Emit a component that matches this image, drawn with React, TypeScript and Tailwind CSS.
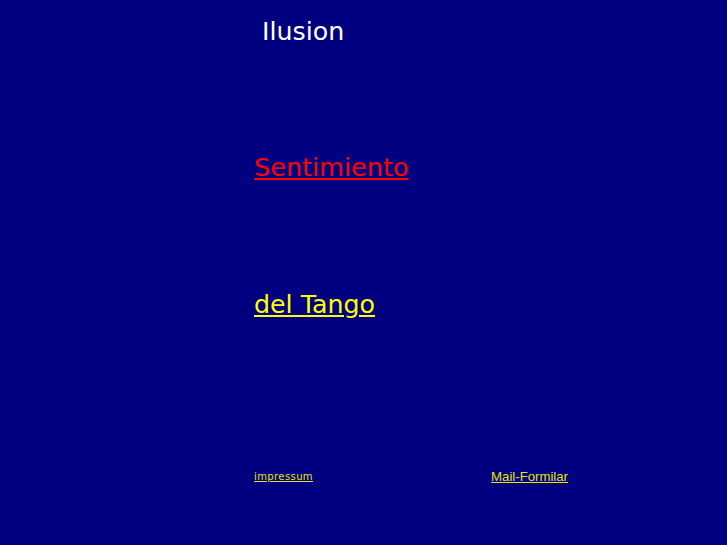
export default function App() {
  return (
    <div className="w-[727px] h-[545px] bg-[#000080] overflow-hidden" style={{ fontFamily: '"DejaVu Sans", sans-serif' }}>
      <div className="flex flex-col pl-[254px]">
        <div className="pt-[14px] pl-[8px] text-[25.3px] leading-[36px] text-white">Ilusion</div>
        <a href="#" className="mt-[99px] text-[25.5px] leading-[36px] text-[#ff0000] underline w-fit">Sentimiento</a>
        <a href="#" className="mt-[102px] text-[25.3px] leading-[36px] text-[#ffff00] underline w-fit">del Tango</a>
        <div className="mt-[146px] flex items-center w-[330px]">
          <a href="#" className="text-[10px] tracking-[0.4px] leading-[14px] text-[#e6e600] underline">impressum</a>
          <a href="#" className="ml-auto mr-[16px] text-[13.2px] leading-[16px] text-[#e6e600] underline" style={{ fontFamily: '"Liberation Sans", Arial, sans-serif' }}>Mail-Formilar</a>
        </div>
      </div>
    </div>
  );
}
